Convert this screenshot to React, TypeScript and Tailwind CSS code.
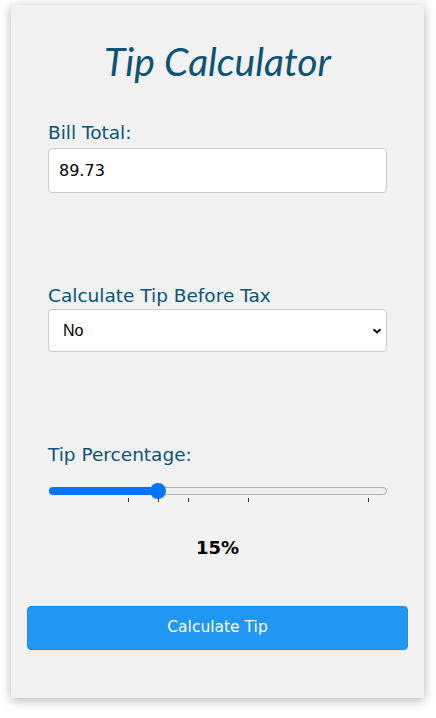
import React, { useState } from 'react';

const ticks = [10, 15, 20, 30, 50];

const toX = (v: number) => 19 + v * 6;

const labelCls = 'block text-[18.5px] leading-[22px] text-[#0b5474]';

export default function App() {
    const [bill, setBill] = useState('89.73');
    const [beforeTax, setBeforeTax] = useState('No');
    const [tip] = useState(15);

    return (
        <div className="min-h-screen bg-white pt-[5px] pl-[11px]">
            <div className="flex flex-col w-[413px] h-[693px] bg-[#f1f1f1] shadow-[0_2px_10px_rgba(0,0,0,0.3)] px-[16px] pt-[28px]">
                <h1 className="text-center text-[39px] leading-[56px] italic text-[#0b5474] font-['Lato',sans-serif]">
                    Tip Calculator
                </h1>

                <div className="flex flex-col gap-[92px] px-[21px] pt-[33px] font-['DejaVu_Sans',sans-serif]">
                    <div className="flex flex-col gap-[4px]">
                        <label className={labelCls}>Bill Total:</label>
                        <input
                            type="text"
                            value={bill}
                            onChange={(e) => setBill(e.target.value)}
                            className="block w-full h-[45px] px-[10px] bg-white border border-[#cccccc] rounded-[4px] text-[16px] text-black outline-none"
                        />
                    </div>

                    <div className="flex flex-col gap-[2px]">
                        <label className={labelCls}>Calculate Tip Before Tax</label>
                        <div className="relative">
                            <select
                                value={beforeTax}
                                onChange={(e) => setBeforeTax(e.target.value)}
                                className="block w-full h-[43px] pl-[14px] appearance-none bg-white border border-[#cccccc] rounded-[4px] text-[16px] text-black font-['Liberation_Sans',Arial,sans-serif] outline-none"
                            >
                                <option>No</option>
                                <option>Yes</option>
                            </select>
                            <svg
                                className="absolute right-[5px] top-[19px] pointer-events-none"
                                width="10"
                                height="6"
                                viewBox="0 0 10 6"
                            >
                                <path d="M1.5 1.2 L5 4.5 L8.5 1.2" fill="none" stroke="#111" strokeWidth="2" />
                            </svg>
                        </div>
                    </div>

                    <div className="flex flex-col">
                        <label className={labelCls}>Tip Percentage:</label>
                        <div className="relative mt-[17px] h-[20px]">
                            <div className="absolute left-[1px] right-0 top-[4px] h-[8px] rounded-full bg-[#efefef] border border-[#b2b2b2]" />
                            <div
                                className="absolute left-[1px] top-[4px] h-[8px] rounded-full bg-[#0075ff]"
                                style={{ width: toX(tip) }}
                            />
                            <div
                                className="absolute top-0 w-[16px] h-[16px] rounded-full bg-[#0075ff]"
                                style={{ left: toX(tip) - 8 + 1 }}
                            />
                            {ticks.map((t) => (
                                <div
                                    key={t}
                                    className="absolute top-[15px] w-[1px] h-[4px] bg-[#333]"
                                    style={{ left: toX(t) + 1 }}
                                />
                            ))}
                        </div>
                        <p className="mt-[34px] text-center text-[18px] leading-[22px] font-bold text-black">
                            {tip}%
                        </p>
                    </div>
                </div>

                <button className="block w-full mt-[47px] h-[44px] rounded-[4px] bg-[#2196f3] border border-[#1e8ee6] text-white text-[15.5px] font-['DejaVu_Sans',sans-serif]">
                    Calculate Tip
                </button>
            </div>
        </div>
    );
}
